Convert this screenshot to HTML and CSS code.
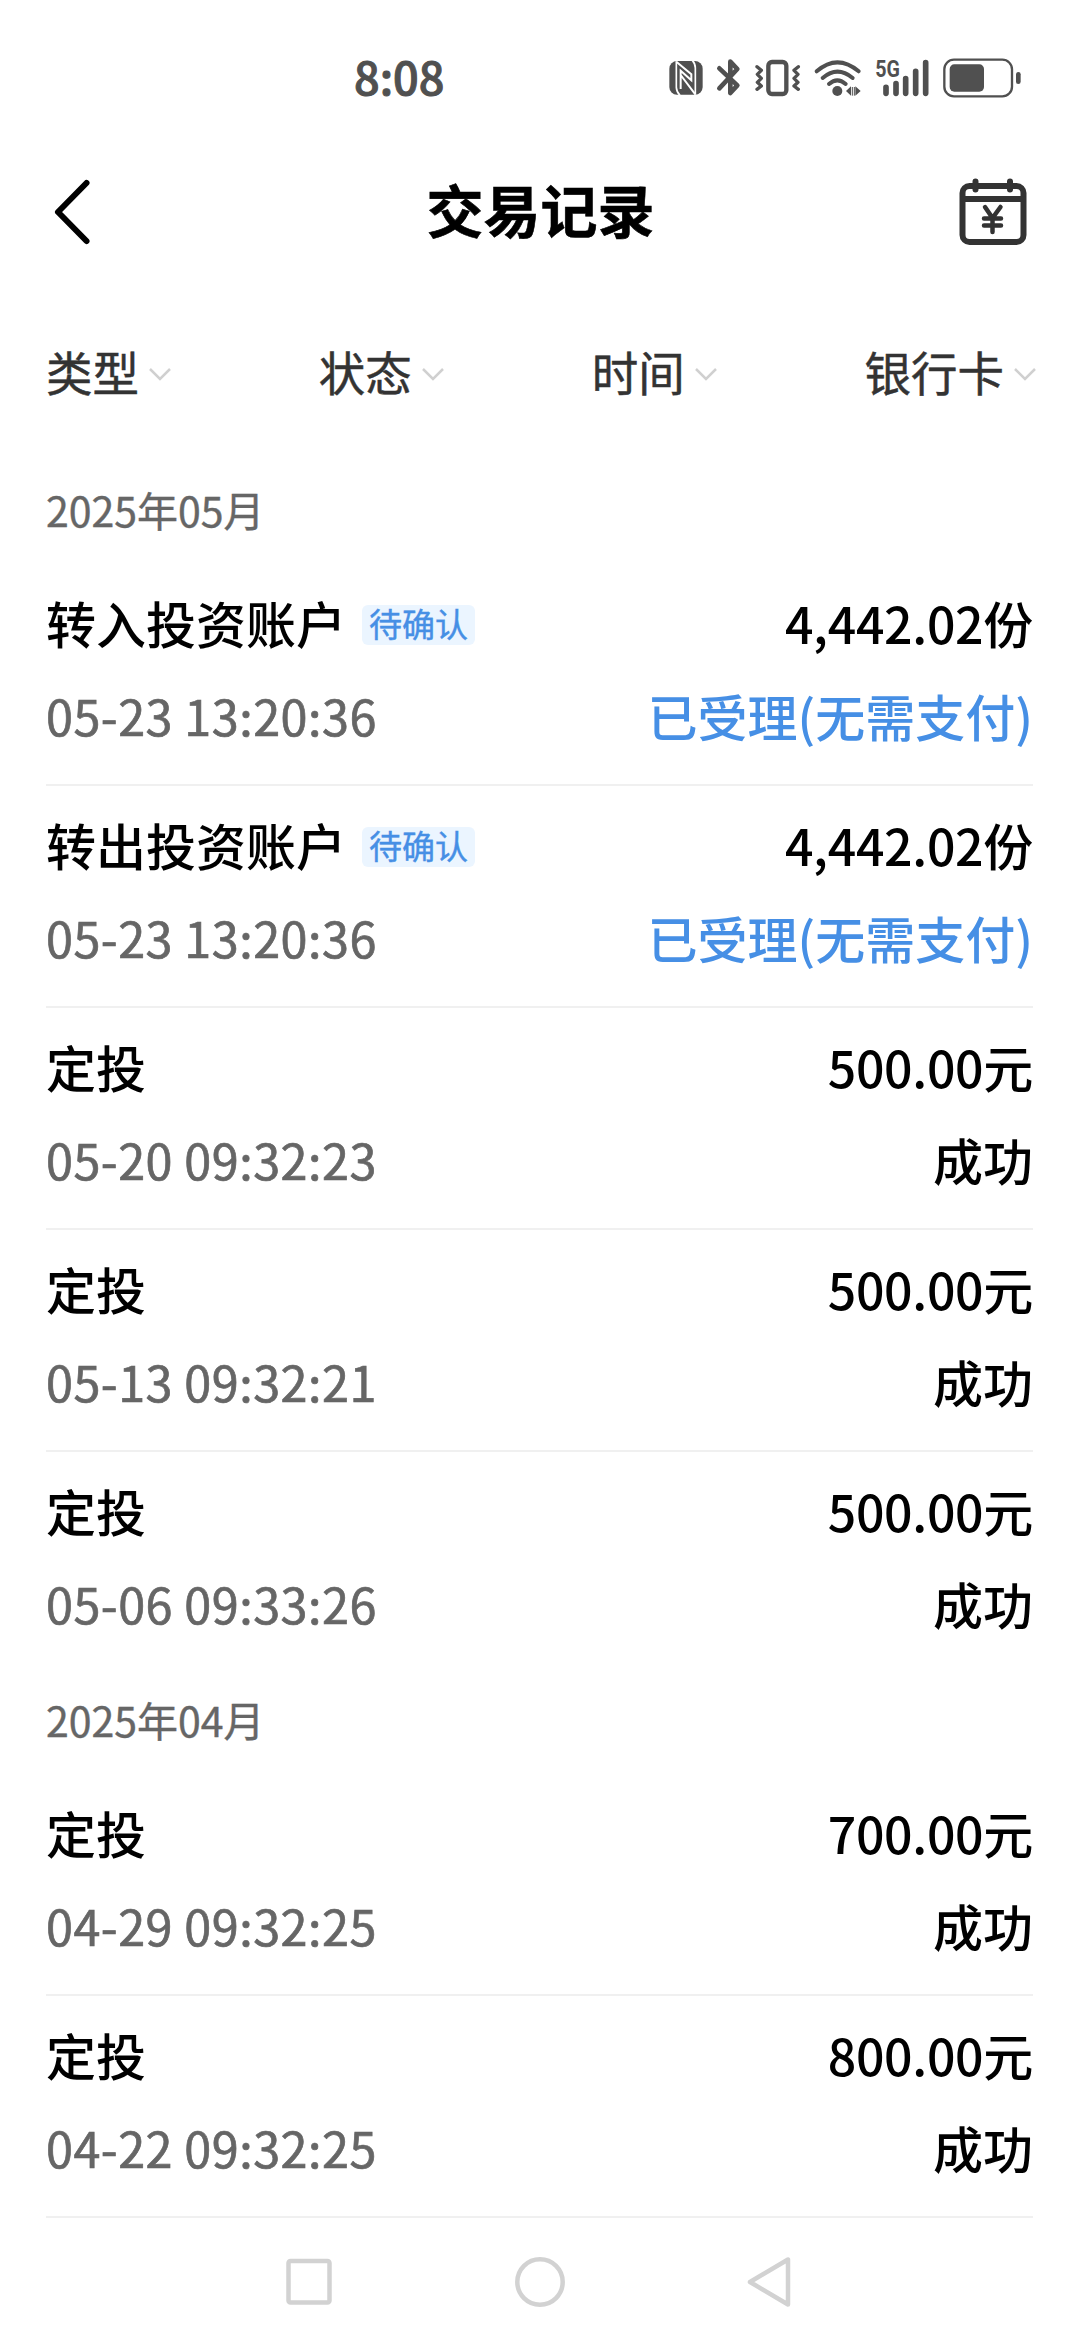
FILE: index.html
```html
<!DOCTYPE html>
<html lang="zh-CN">
<head>
<meta charset="utf-8">
<title>交易记录</title>
<link rel="stylesheet" href="styles.css">
</head>
<body>
<div class="screen">
  <div class="status-bar">
    <span class="clock">8:08</span>
    <svg class="status-icons" viewBox="0 0 1200 240" fill="#505050" stroke="none">
      <rect x="88" y="63" width="100" height="101" rx="23"/>
      <path d="M109 64V143Q110 157 120 166M157 61Q166 71 166 84V164" fill="none" stroke="#fff" stroke-width="5"/>
      <path d="M109 65L154 103V121L122 92V147M122 105L166 163" fill="none" stroke="#fff" stroke-width="6"/>
      <path d="M238 85L292 136L271 159V65L292 87L238 145" fill="none" stroke="#505050" stroke-width="14" stroke-linecap="round" stroke-linejoin="round"/>
      <rect x="385" y="66" width="54" height="96" rx="11" fill="none" stroke="#505050" stroke-width="13"/>
      <path d="M351 80L364 91L352 103L364 115L352 127L364 138L351 148M475 80L462 91L474 103L462 115L474 127L462 138L475 148" fill="none" stroke="#505050" stroke-width="10" stroke-linecap="round" stroke-linejoin="round"/>
      <path d="M530 94Q592 40 656 94M548 114Q592 76 638 114M567 132Q592 110 617 132" fill="none" stroke="#505050" stroke-width="12" stroke-linecap="round"/>
      <circle cx="592" cy="153" r="15"/>
      <path d="M618 153L633 139V167ZM662 153L646 139V167Z"/>
      <path d="M637 141V167M643 141V167" fill="none" stroke="#505050" stroke-width="3"/>
      <text class="network" x="706" y="111" textLength="74" lengthAdjust="spacingAndGlyphs">5G</text>
      <path d="M738 142V160M768 131V160M797 116V160M827 94V160M857 68V160" fill="none" stroke="#505050" stroke-width="17" stroke-linecap="round"/>
      <rect x="913" y="59" width="203" height="110" rx="29" fill="none" stroke="#505050" stroke-width="7"/>
      <rect x="929" y="73" width="103" height="82" rx="14"/>
      <rect x="1128" y="96" width="14" height="36" rx="7"/>
    </svg>
  </div>

  <div class="header">
    <svg class="back" viewBox="0 0 40 70"><path d="M34.500 6L6 35L34.500 64" fill="none" stroke="#000" stroke-width="6" stroke-linecap="round" stroke-linejoin="round"/></svg>
    <h1 class="title">交易记录</h1>
    <svg class="calendar" viewBox="0 0 68 68" fill="none" stroke="#333" stroke-width="6" stroke-linecap="round" stroke-linejoin="round">
      <rect x="3.500" y="8" width="61" height="56" rx="7"/>
      <path d="M4 21H64" /><path d="M16.500 3.500V11.500M51 3.500V11.500"/>
      <path d="M26 29L33.500 40L41.500 29M33.500 40V54M25 40.500H42M25 47.500H42" stroke-width="4.500"/>
    </svg>
  </div>

  <div class="filters">
    <div class="filter"><span>类型</span><svg class="arrow" viewBox="0 0 24 14"><path d="M2 2L12 12L22 2"/></svg></div>
    <div class="filter"><span>状态</span><svg class="arrow" viewBox="0 0 24 14"><path d="M2 2L12 12L22 2"/></svg></div>
    <div class="filter"><span>时间</span><svg class="arrow" viewBox="0 0 24 14"><path d="M2 2L12 12L22 2"/></svg></div>
    <div class="filter"><span>银行卡</span><svg class="arrow" viewBox="0 0 24 14"><path d="M2 2L12 12L22 2"/></svg></div>
  </div>

  <div class="records">
    <h2 class="month">2025年05月</h2>
    <div class="record">
      <div class="line"><span class="name">转入投资账户<span class="tag">待确认</span></span><span class="amount">4,442.02份</span></div>
      <div class="line"><span class="date">05-23 13:20:36</span><span class="state pending">已受理(无需支付)</span></div>
    </div>
    <div class="record">
      <div class="line"><span class="name">转出投资账户<span class="tag">待确认</span></span><span class="amount">4,442.02份</span></div>
      <div class="line"><span class="date">05-23 13:20:36</span><span class="state pending">已受理(无需支付)</span></div>
    </div>
    <div class="record">
      <div class="line"><span class="name">定投</span><span class="amount">500.00元</span></div>
      <div class="line"><span class="date">05-20 09:32:23</span><span class="state">成功</span></div>
    </div>
    <div class="record">
      <div class="line"><span class="name">定投</span><span class="amount">500.00元</span></div>
      <div class="line"><span class="date">05-13 09:32:21</span><span class="state">成功</span></div>
    </div>
    <div class="record last">
      <div class="line"><span class="name">定投</span><span class="amount">500.00元</span></div>
      <div class="line"><span class="date">05-06 09:33:26</span><span class="state">成功</span></div>
    </div>
    <h2 class="month">2025年04月</h2>
    <div class="record">
      <div class="line"><span class="name">定投</span><span class="amount">700.00元</span></div>
      <div class="line"><span class="date">04-29 09:32:25</span><span class="state">成功</span></div>
    </div>
    <div class="record">
      <div class="line"><span class="name">定投</span><span class="amount">800.00元</span></div>
      <div class="line"><span class="date">04-22 09:32:25</span><span class="state">成功</span></div>
    </div>
  </div>

  <div class="nav">
    <svg class="nav-icon" viewBox="0 0 60 60"><rect x="10.500" y="9" width="41" height="41.500" rx="2"/></svg>
    <svg class="nav-icon" viewBox="0 0 60 60"><circle cx="30" cy="30" r="22.700"/></svg>
    <svg class="nav-icon" viewBox="0 0 60 60"><path d="M8 30L46 7.500V52.500Z"/></svg>
  </div>
</div>
</body>
</html>
```
FILE: styles.css
```css
* { box-sizing: border-box; }
body {
  margin: 0;
  background: #fff;
  color: #000;
  font-family: "Noto Sans CJK SC", sans-serif;
}
svg { display: block; flex: none; }
.screen {
  width: 1080px;
  height: 2340px;
  display: flex;
  flex-direction: column;
  overflow: hidden;
}
.status-bar {
  height: 140px;
  padding: 40px 40px 0 354px;
  display: flex;
  justify-content: space-between;
}
.clock {
  font-size: 45px;
  font-weight: 500;
  line-height: 72px;
  color: #505050;
  -webkit-text-stroke: 1px #505050;
}
.status-icons { width: 400px; height: 80px; }
.network { font: bold 70px Roboto, sans-serif; }
.header {
  height: 144px;
  padding: 0 53px 0 52px;
  display: flex;
  align-items: center;
  justify-content: space-between;
}
.back { width: 40px; height: 70px; }
.calendar { width: 68px; height: 68px; }
.title {
  margin: 0 0 0 30px;
  padding-bottom: 9px;
  font-size: 57px;
  font-weight: 700;
  line-height: 80px;
  -webkit-text-stroke: .6px #000;
}
.filters {
  height: 180px;
  padding: 0 43px 0 46px;
  display: flex;
  align-items: center;
  justify-content: space-between;
}
.filter {
  display: flex;
  align-items: center;
  gap: 9px;
  font-size: 46.5px;
  line-height: 66px;
  color: #333;
}
.filter span { padding-bottom: 6px; -webkit-text-stroke: .5px #333; }
.arrow {
  width: 24px;
  height: 14px;
  fill: none;
  stroke: #d0d0d0;
  stroke-width: 2.5;
}
.records { padding: 0 47px 0 46px; }
.month {
  margin: 0;
  height: 100px;
  font-size: 41px;
  font-weight: 400;
  line-height: 90px;
  color: #666;
  -webkit-text-stroke: .4px #666;
}
.record {
  height: 222px;
  padding-top: 12px;
  border-bottom: 2px solid #f0f0f0;
}
.record.last { border-bottom-color: transparent; }
.line {
  height: 93px;
  display: flex;
  justify-content: space-between;
  font-size: 50px;
  line-height: 93px;
}
.name { display: flex; align-items: center; gap: 16px; }
.name, .amount, .state { font-weight: 500; }
.amount { letter-spacing: -.3px; }
.tag {
  height: 40px;
  margin-top: 4px;
  padding: 0 7px;
  border-radius: 6px;
  background: #ebf5ff;
  color: #468fe5;
  font-size: 33px;
  font-weight: 400;
  line-height: 37px;
  -webkit-text-stroke: .4px #468fe5;
}
.date {
  font-size: 48.5px;
  color: #666;
  letter-spacing: .5px;
  -webkit-text-stroke: .7px #666;
}
.pending { color: #468fe5; }
.nav {
  flex: 1;
  padding: 34px 278px 0;
  display: flex;
  justify-content: space-between;
}
.nav-icon {
  width: 60px;
  height: 60px;
  fill: none;
  stroke: #d2d2d2;
  stroke-width: 4.5;
  stroke-linejoin: round;
}
```
